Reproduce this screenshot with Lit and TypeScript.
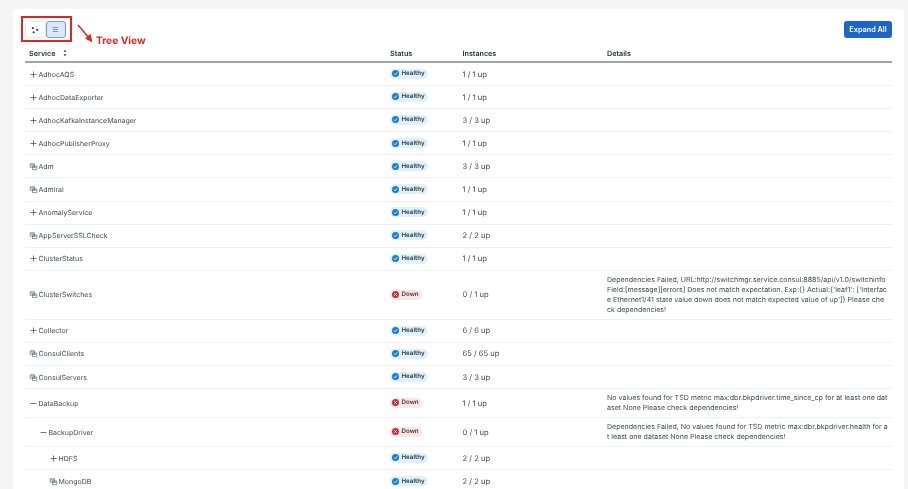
import { LitElement, html, css, svg } from "lit";
import { customElement } from "lit/decorators.js";

type Row = {
  name: string;
  icon: "plus" | "minus" | "leaf";
  depth?: number;
  down?: boolean;
  up: string;
  details?: string;
};

const rows: Row[] = [
  { name: "AdhocAQS", icon: "plus", up: "1 / 1 up" },
  { name: "AdhocDataExporter", icon: "plus", up: "1 / 1 up" },
  { name: "AdhocKafkaInstanceManager", icon: "plus", up: "3 / 3 up" },
  { name: "AdhocPublisherProxy", icon: "plus", up: "1 / 1 up" },
  { name: "Adm", icon: "leaf", up: "3 / 3 up" },
  { name: "Admiral", icon: "leaf", up: "1 / 1 up" },
  { name: "AnomalyService", icon: "plus", up: "1 / 1 up" },
  { name: "AppServerSSLCheck", icon: "leaf", up: "2 / 2 up" },
  { name: "ClusterStatus", icon: "plus", up: "1 / 1 up" },
  {
    name: "ClusterSwitches",
    icon: "leaf",
    down: true,
    up: "0 / 1 up",
    details:
      "Dependencies Failed, URL:http://switchmgr.service.consul:8885/api/v1.0/switchinfo Field:[message][errors] Does not match expectation. Exp:{} Actual:{'leaf1': ['Interface Ethernet1/41 state value down does not match expected value of up']} Please check dependencies!",
  },
  { name: "Collector", icon: "plus", up: "6 / 6 up" },
  { name: "ConsulClients", icon: "leaf", up: "65 / 65 up" },
  { name: "ConsulServers", icon: "leaf", up: "3 / 3 up" },
  {
    name: "DataBackup",
    icon: "minus",
    down: true,
    up: "1 / 1 up",
    details:
      "No values found for TSD metric max:dbr.bkpdriver.time_since_cp for at least one dataset None Please check dependencies!",
  },
  {
    name: "BackupDriver",
    icon: "minus",
    depth: 1,
    down: true,
    up: "0 / 1 up",
    details:
      "Dependencies Failed, No values found for TSD metric max:dbr.bkpdriver.health for at least one dataset None Please check dependencies!",
  },
  { name: "HDFS", icon: "plus", depth: 2, up: "2 / 2 up" },
  { name: "MongoDB", icon: "leaf", depth: 2, up: "2 / 2 up" },
];

const rowIcon = (kind: Row["icon"]) => {
  if (kind === "plus")
    return svg`<path d="M4.500 1.500v6M1.500 4.500h6" stroke="#4f545b" stroke-width=".8" fill="none"/>`;
  if (kind === "minus")
    return svg`<path d="M1.500 4.500h6" stroke="#4f545b" stroke-width=".8" fill="none"/>`;
  return svg`<path d="M1.200 1.800h4.300v3.400H1.200zM3.500 4h4.300v3.600H3.500z" stroke="#62676e" stroke-width=".7" fill="none"/>
    <path d="M1.800 3h3.200M4 5.200h3.200" stroke="#62676e" stroke-width=".7"/>`;
};

@customElement("app-root")
export class AppRoot extends LitElement {
  static styles = css`
    :host {
      display: block;
      height: 489px;
      overflow: hidden;
      background: #f5f5f5;
      font-family: Inter, "Liberation Sans", sans-serif;
      color: #44484f;
      text-rendering: geometricPrecision;
    }
    .card {
      position: relative;
      margin: 9px 4px 0 13px;
      padding: 12px 12px 0;
      background: #fff;
      border-radius: 4px;
      filter: blur(0.3px);
    }
    .toolbar {
      display: flex;
      justify-content: space-between;
      align-items: flex-start;
      height: 24px;
    }
    .toggle {
      display: flex;
      height: 17px;
    }
    .toggle button {
      width: 20.500px;
      padding: 0;
      display: flex;
      align-items: center;
      justify-content: center;
      background: #fff;
      border: 1px solid #e9eaec;
      border-radius: 3px 0 0 3px;
    }
    .toggle button.on {
      background: #dbe8f9;
      border: 1px solid #6d9bdc;
      border-radius: 3px;
    }
    .expand {
      width: 48px;
      height: 17px;
      padding: 0;
      border: none;
      border-radius: 3px;
      background: #1c66c9;
      color: #fff;
      font: 600 7.300px Inter, "Liberation Sans", sans-serif;
    }
    .row {
      display: grid;
      grid-template-columns: 361px 72.500px 144.500px 1fr;
      align-items: center;
      min-height: 23.100px;
      box-sizing: border-box;
      padding: 4px;
      border-bottom: 1px solid #eff0f2;
      font-size: 7px;
    }
    .head {
      min-height: 0;
      height: 18px;
      padding: 1px 4px 0;
      border-bottom: 2px solid #a3a5a9;
      font-weight: 600;
      font-size: 7.200px;
      color: #2b2f35;
    }
    .sort {
      margin-left: 5px;
      vertical-align: -1px;
    }
    .name {
      display: flex;
      align-items: center;
      gap: 0.500px;
    }
    .depth-1 {
      padding-left: 10px;
    }
    .depth-2 {
      padding-left: 20px;
    }
    .name svg {
      width: 9px;
      height: 9px;
      flex: none;
    }
    .up {
      font-size: 7.600px;
    }
    .badge {
      display: inline-flex;
      align-items: center;
      gap: 2.500px;
      height: 10px;
      padding: 0 3.500px 0 2px;
      border-radius: 5px;
      background: #dff1fb;
      color: #2f3a46;
      font-size: 6.200px;
      font-weight: 600;
    }
    .badge.down {
      background: #fbe6e6;
      color: #4a3338;
    }
    .badge svg {
      width: 7px;
      height: 7px;
    }
    .details {
      font-size: 7.050px;
      line-height: 10px;
      word-break: break-all;
    }
    .mark {
      position: absolute;
      left: 8px;
      top: 7px;
      width: 47px;
      height: 22px;
      border: 2px solid #d9291f;
    }
    .arrow {
      position: absolute;
      left: 62px;
      top: 12px;
      width: 20px;
      height: 24px;
    }
    .tree {
      position: absolute;
      left: 83px;
      top: 26px;
      color: #d9291f;
      font-size: 10.200px;
      font-weight: 700;
      line-height: 12px;
    }
  `;

  render() {
    return html`
      <div class="card">
        <div class="toolbar">
          <div class="toggle">
            <button>
              <svg width="8" height="8" viewBox="0 0 9 9" fill="#33373d">
                <circle cx="2" cy="2.200" r="1.200" />
                <circle cx="7" cy="4.300" r="1.200" />
                <circle cx="3" cy="7" r="1.200" />
              </svg>
            </button>
            <button class="on">
              <svg width="7" height="7" viewBox="0 0 9 9" stroke="#6f93c4" stroke-width="1.200">
                <path d="M1 2h7M1 4.500h7M1 7h7" />
              </svg>
            </button>
          </div>
          <button class="expand">Expand All</button>
        </div>
        <div class="row head">
          <div>
            Service
            <svg class="sort" width="6" height="8" viewBox="0 0 6 8" fill="#33373d">
              <path d="M3 .8l1.500 2h-3zM3 7.200l1.500-2h-3z" />
            </svg>
          </div>
          <div>Status</div>
          <div>Instances</div>
          <div>Details</div>
        </div>
        ${rows.map(
          (r) => html`
            <div class="row">
              <div class="name depth-${r.depth ?? 0}">
                <svg viewBox="0 0 9 9">${rowIcon(r.icon)}</svg>
                <span>${r.name}</span>
              </div>
              <div>
                ${r.down
                  ? html`<span class="badge down">
                      <svg viewBox="0 0 8 8">
                        <circle cx="4" cy="4" r="4" fill="#c9303e" />
                        <path d="M2.600 2.600l2.800 2.800M5.400 2.600l-2.800 2.800" stroke="#fff" stroke-width="1" />
                      </svg>
                      Down
                    </span>`
                  : html`<span class="badge">
                      <svg viewBox="0 0 8 8">
                        <circle cx="4" cy="4" r="4" fill="#1d7fd1" />
                        <path d="M2.200 4.100l1.300 1.300 2.300-2.600" stroke="#fff" stroke-width="1" fill="none" />
                      </svg>
                      Healthy
                    </span>`}
              </div>
              <div class="up">${r.up}</div>
              <div class="details">${r.details ?? ""}</div>
            </div>
          `
        )}
        <div class="mark"></div>
        <svg class="arrow" viewBox="0 0 20 24">
          <path d="M3 4l12 14" stroke="#d9291f" stroke-width="1.500" fill="none" />
          <path d="M17.500 21.500l-7.500-4 5.500-4.800z" fill="#d9291f" />
        </svg>
        <div class="tree">Tree View</div>
      </div>
    `;
  }
}
